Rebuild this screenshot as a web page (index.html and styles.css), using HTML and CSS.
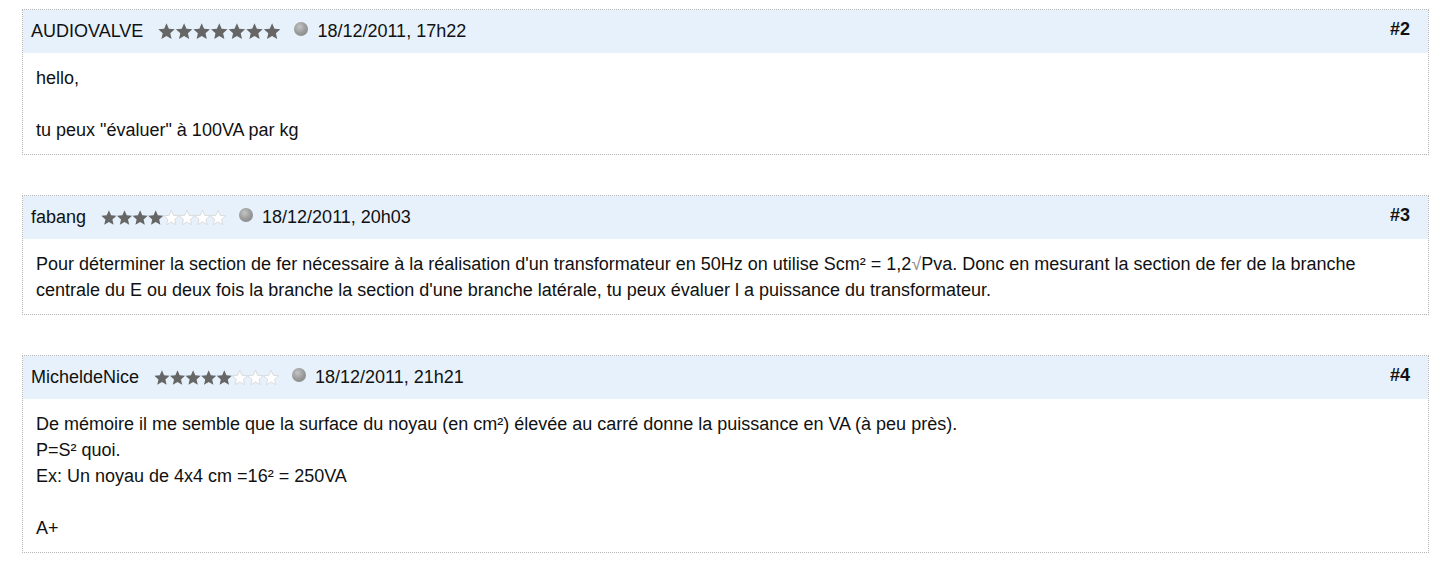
FILE: index.html
```html
<!DOCTYPE html>
<html lang="fr">
<head>
<meta charset="utf-8">
<title>Messages</title>
<link rel="stylesheet" href="styles.css">
</head>
<body>
<svg class="defs" width="0" height="0" aria-hidden="true">
  <defs>
    <polygon id="st" points="8.5,0.3 10.85,5.76 16.77,6.31 12.3,10.24 13.61,16.04 8.5,13 3.39,16.04 4.7,10.24 0.23,6.31 6.15,5.76"/>
  </defs>
</svg>
<div class="page">
  <div class="post">
    <div class="post-head">
      <span class="author">AUDIOVALVE</span>
      <svg class="stars stars7" viewBox="0 0 123 17">
        <use href="#st" x="0" class="on"/><use href="#st" x="17.6" class="on"/><use href="#st" x="35.2" class="on"/><use href="#st" x="52.8" class="on"/><use href="#st" x="70.4" class="on"/><use href="#st" x="88" class="on"/><use href="#st" x="105.6" class="on"/>
      </svg>
      <span class="dot"></span>
      <span class="date">18/12/2011, 17h22</span>
      <span class="num">#2</span>
    </div>
    <div class="post-body">
      <p>hello,</p>
      <p>&nbsp;</p>
      <p>tu peux "évaluer" à 100VA par kg</p>
    </div>
  </div>

  <div class="post">
    <div class="post-head">
      <span class="author">fabang</span>
      <svg class="stars stars8" viewBox="0 0 136 17">
        <use href="#st" x="0" class="on"/><use href="#st" x="17" class="on"/><use href="#st" x="34" class="on"/><use href="#st" x="51" class="on"/><use href="#st" x="68" class="off"/><use href="#st" x="85" class="off"/><use href="#st" x="102" class="off"/><use href="#st" x="119" class="off"/>
      </svg>
      <span class="dot"></span>
      <span class="date">18/12/2011, 20h03</span>
      <span class="num">#3</span>
    </div>
    <div class="post-body">
      <p>Pour déterminer la section de fer nécessaire à la réalisation d'un transformateur en 50Hz on utilise Scm² = 1,2<span class="sqrt">√</span>Pva. Donc en mesurant la section de fer de la branche centrale du E ou deux fois la branche la section d'une branche latérale, tu peux évaluer l a puissance du transformateur.</p>
    </div>
  </div>

  <div class="post">
    <div class="post-head">
      <span class="author">MicheldeNice</span>
      <svg class="stars stars8" viewBox="0 0 136 17">
        <use href="#st" x="0" class="on"/><use href="#st" x="17" class="on"/><use href="#st" x="34" class="on"/><use href="#st" x="51" class="on"/><use href="#st" x="68" class="on"/><use href="#st" x="85" class="off"/><use href="#st" x="102" class="off"/><use href="#st" x="119" class="off"/>
      </svg>
      <span class="dot"></span>
      <span class="date">18/12/2011, 21h21</span>
      <span class="num">#4</span>
    </div>
    <div class="post-body">
      <p>De mémoire il me semble que la surface du noyau (en cm²) élevée au carré donne la puissance en VA (à peu près).</p>
      <p>P=S² quoi.</p>
      <p>Ex: Un noyau de 4x4 cm =16² = 250VA</p>
      <p>&nbsp;</p>
      <p>A+</p>
    </div>
  </div>
</div>
</body>
</html>
```

FILE: styles.css
```css
html, body {
  margin: 0;
  padding: 0;
  background: #ffffff;
}

body {
  font-family: "Liberation Sans", Arial, sans-serif;
  font-size: 18px;
  color: #111111;
}

.defs {
  position: absolute;
  width: 0;
  height: 0;
  overflow: hidden;
}

.page {
  padding: 9px 13px 0 22px;
}

.post {
  border: 1px dotted #b4b4b4;
  margin-bottom: 40px;
}

.post:last-child {
  margin-bottom: 0;
}

.post-head {
  display: flex;
  align-items: center;
  height: 43px;
  padding: 0 18px 0 8px;
  background: #e6f1fc;
}

.author {
  margin-right: 15px;
}

.stars {
  margin-right: 13px;
}

.stars7 {
  width: 123px;
  height: 17px;
}

.stars8 {
  width: 125px;
  height: 15.6px;
}

.stars .on {
  fill: #666666;
}

.stars .off {
  fill: #ffffff;
  stroke: #d4d4d4;
  stroke-width: 0.9;
}

.dot {
  width: 14px;
  height: 14px;
  border-radius: 50%;
  background: radial-gradient(circle at 40% 35%, #c4c4c4 0%, #9a9a9a 50%, #808080 100%);
  margin-right: 9px;
  position: relative;
  top: -3px;
}

.num {
  margin-left: auto;
  font-weight: bold;
  position: relative;
  top: -2px;
}

.post-body {
  padding: 12px 12px 11px 13px;
  line-height: 26px;
}

.post-body p {
  margin: 0;
}

.sqrt {
  color: #888888;
}
```
